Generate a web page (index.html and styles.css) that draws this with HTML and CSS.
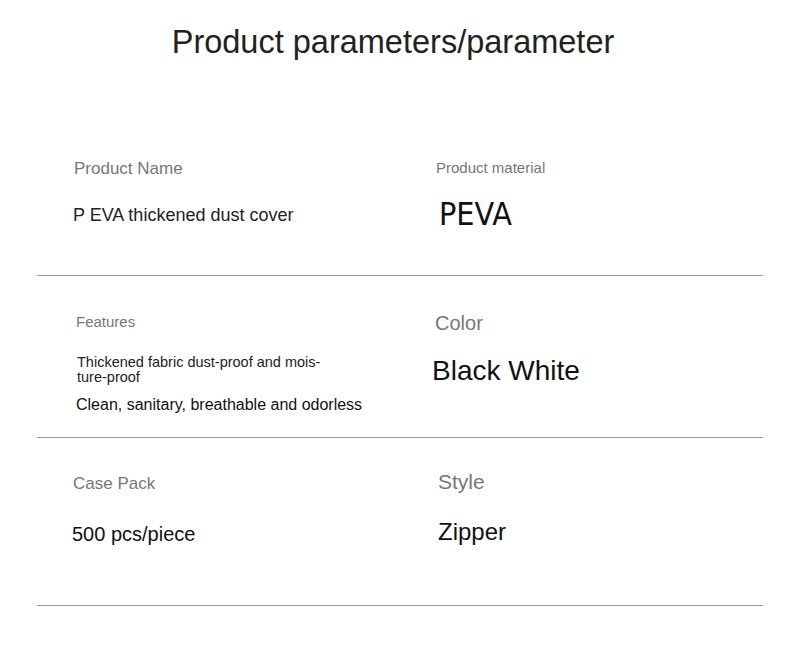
FILE: index.html
```html
<!DOCTYPE html>
<html lang="en">
<head>
<meta charset="utf-8">
<title>Product parameters</title>
<link rel="stylesheet" href="styles.css">
</head>
<body>
<div class="page">
  <h1 class="title">Product parameters/parameter</h1>
  <div class="table">
    <div class="row row1">
      <div class="cell left">
        <div class="label l-name">Product Name</div>
        <div class="value v-name">P EVA thickened dust cover</div>
      </div>
      <div class="cell right">
        <div class="label l-material">Product material</div>
        <div class="value v-peva">PEVA</div>
      </div>
    </div>
    <div class="row row2">
      <div class="cell left">
        <div class="label l-features">Features</div>
        <div class="value v-thick">Thickened fabric dust-proof and mois&shy;ture-proof</div>
        <div class="value v-clean">Clean, sanitary, breathable and odorless</div>
      </div>
      <div class="cell right">
        <div class="label l-color">Color</div>
        <div class="value v-color">Black White</div>
      </div>
    </div>
    <div class="row row3">
      <div class="cell left">
        <div class="label l-case">Case Pack</div>
        <div class="value v-case">500 pcs/piece</div>
      </div>
      <div class="cell right">
        <div class="label l-style">Style</div>
        <div class="value v-style">Zipper</div>
      </div>
    </div>
  </div>
</div>
</body>
</html>
```
FILE: styles.css
```css
* { box-sizing: border-box; }
html, body { margin: 0; padding: 0; background: #fff; }
body {
  font-family: "Liberation Sans", Arial, sans-serif;
  width: 800px;
  height: 647px;
  overflow: hidden;
}
.page { padding: 22px 37px 0; }
.title {
  margin: 0;
  padding-right: 14px;
  text-align: center;
  font-weight: normal;
  font-size: 32.5px;
  line-height: 40px;
  color: #222;
}
.table { margin-top: 88px; }
.row {
  display: grid;
  grid-template-columns: 359px 1fr;
  border-bottom: 1px solid #9a9a9a;
  padding-left: 36px;
}
.row1 { height: 126px; }
.row2 { height: 162px; }
.row3 { height: 168px; }
.cell { display: flex; flex-direction: column; align-items: flex-start; }
.label { color: #777; }
.value { color: #222; }

.l-name { font-size: 17px; line-height: 20px; margin-top: 9px; padding-left: 1px; }
.v-name { font-size: 18px; line-height: 22px; margin-top: 25px; }
.l-material { font-size: 15px; line-height: 18px; margin-top: 9px; padding-left: 4px; }
.v-peva {
  font-family: "DejaVu Sans Condensed", "DejaVu Sans", sans-serif;
  font-weight: 200;
  font-size: 32px;
  line-height: 36px;
  margin-top: 19px;
  padding-left: 7px;
  color: #111;
}

.l-features { font-size: 15px; line-height: 18px; margin-top: 37px; padding-left: 3px; }
.v-thick {
  font-size: 14.5px;
  line-height: 15px;
  margin-top: 23.5px;
  padding-left: 4px;
  width: 254px;
  hyphens: manual;
}
.v-clean { font-size: 16px; line-height: 18px; margin-top: 11.5px; padding-left: 3px; color: #111; }
.l-color { font-size: 20px; line-height: 23px; margin-top: 35.5px; padding-left: 3px; }
.v-color { font-size: 28px; line-height: 32px; margin-top: 20.5px; color: #111; }

.l-case { font-size: 17px; line-height: 20px; margin-top: 36px; }
.v-case { font-size: 20px; line-height: 23px; margin-top: 28.5px; margin-left: -1px; color: #111; }
.l-style { font-size: 21px; line-height: 24px; margin-top: 32px; padding-left: 6px; }
.v-style { font-size: 24px; line-height: 28px; margin-top: 24px; padding-left: 6px; color: #111; }
```
